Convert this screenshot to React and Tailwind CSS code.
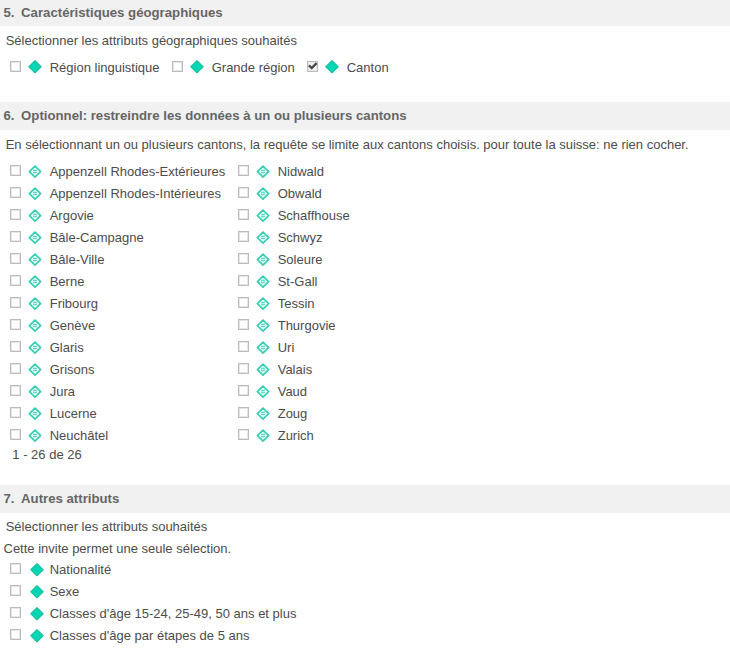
const leftCantons = [
  'Appenzell Rhodes-Extérieures', 'Appenzell Rhodes-Intérieures', 'Argovie', 'Bâle-Campagne', 'Bâle-Ville',
  'Berne', 'Fribourg', 'Genève', 'Glaris', 'Grisons', 'Jura', 'Lucerne', 'Neuchâtel',
];
const rightCantons = [
  'Nidwald', 'Obwald', 'Schaffhouse', 'Schwyz', 'Soleure', 'St-Gall', 'Tessin', 'Thurgovie', 'Uri',
  'Valais', 'Vaud', 'Zoug', 'Zurich',
];
const others = ['Nationalité', 'Sexe', "Classes d'âge 15-24, 25-49, 50 ans et plus", "Classes d'âge par étapes de 5 ans"];

function Checkbox({ checked = false }) {
  return (
    <span
      role="checkbox"
      aria-checked={checked}
      className={`mt-1 block size-[11px] shrink-0 border border-[#bcbcbc] shadow-[inset_0_0_0_1px_#e6e6e6] ${checked ? 'bg-[#f4f4f4]' : 'bg-white'}`}
    >
      {checked && (
        <svg viewBox="0 0 9 9" className="block size-[9px] overflow-visible">
          <path d="M1 3.4 L3.7 6 L8.6 1.2" fill="none" stroke="#4a4a4a" strokeWidth="2.4" />
        </svg>
      )}
    </span>
  );
}

function Diamond({ outline = false }) {
  return (
    <svg viewBox="0 0 14 14" className="block size-[14px] shrink-0">
      {outline ? (
        <>
          <path d="M7 1.1 L12.6 6.6 L7 12.1 L1.4 6.6 Z" fill="#fff" stroke="#35cfb3" strokeWidth="1.7" strokeLinejoin="round" />
          <path d="M5 5.5 H9 M5 7.5 H9" stroke="#5fdac4" strokeWidth="1" />
          <path d="M5 4.5 H9 M4.5 6.5 H9.5 M5.5 8.5 H8.5" stroke="#c4f2ea" strokeWidth="1" />
        </>
      ) : (
        <path d="M7 0.7 L13.1 6.7 L7 12.7 L0.9 6.7 Z" fill="#06d6b4" stroke="#16c3a3" strokeWidth="1.2" strokeLinejoin="round" />
      )}
    </svg>
  );
}

function Option({ label, outline, checked, iconClass = 'ml-[7px] mr-[7.7px] mt-1' }) {
  return (
    <div className="flex h-[22px] items-start">
      <Checkbox checked={checked} />
      <span className={iconClass}><Diamond outline={outline} /></span>
      <span className="whitespace-nowrap">{label}</span>
    </div>
  );
}

function Header({ number, title, first }) {
  return (
    <h2 className={`flex bg-[#f1f1f1] pl-[3.5px] text-[13.2px] font-bold text-[#666] ${first ? 'h-[26px] pt-[2px]' : 'h-7 pt-[3px]'}`}>
      <span className="w-[17.6px]">{number}.</span>
      <span>{title}</span>
    </h2>
  );
}

export default function App() {
  const raised = 'ml-[7px] mr-[7.7px] mt-[3px]';
  return (
    <main className="h-[658px] w-[730px] overflow-hidden bg-white font-['Liberation_Sans',Arial,sans-serif] text-[13px] leading-[21px] text-[#4c4c4c]">
      <section className="h-[102px]">
        <Header number={5} title="Caractéristiques géographiques" first />
        <p className="pl-[5.7px] pt-1">Sélectionner les attributs géographiques souhaités</p>
        <div className="flex pl-[10px] pt-[6px]">
          <div className="w-[162px]"><Option label="Région linguistique" iconClass={raised} /></div>
          <div className="w-[135px]"><Option label="Grande région" iconClass={raised} /></div>
          <Option label="Canton" checked iconClass={raised} />
        </div>
      </section>
      <section className="h-[383px]">
        <Header number={6} title="Optionnel: restreindre les données à un ou plusieurs cantons" />
        <p className="whitespace-nowrap pl-[5.7px] pt-1">
          En sélectionnant un ou plusieurs cantons, la requête se limite aux cantons choisis. pour toute la suisse: ne rien cocher.
        </p>
        <div className="flex pl-[10px] pt-[6px]">
          <div className="w-[228px]">{leftCantons.map((c) => <Option key={c} label={c} outline />)}</div>
          <div>{rightCantons.map((c) => <Option key={c} label={c} outline />)}</div>
        </div>
        <p className="-mt-[3px] pl-[12.3px]">1 - 26 de 26</p>
      </section>
      <section>
        <Header number={7} title="Autres attributs" />
        <p className="pl-[5.7px] pt-[3px]">Sélectionner les attributs souhaités</p>
        <p className="pl-[3.5px] pt-px">Cette invite permet une seule sélection.</p>
        <div className="pl-[10px]">
          {others.map((o) => <Option key={o} label={o} iconClass="ml-[9px] mr-[5.7px] mt-1" />)}
        </div>
      </section>
    </main>
  );
}
